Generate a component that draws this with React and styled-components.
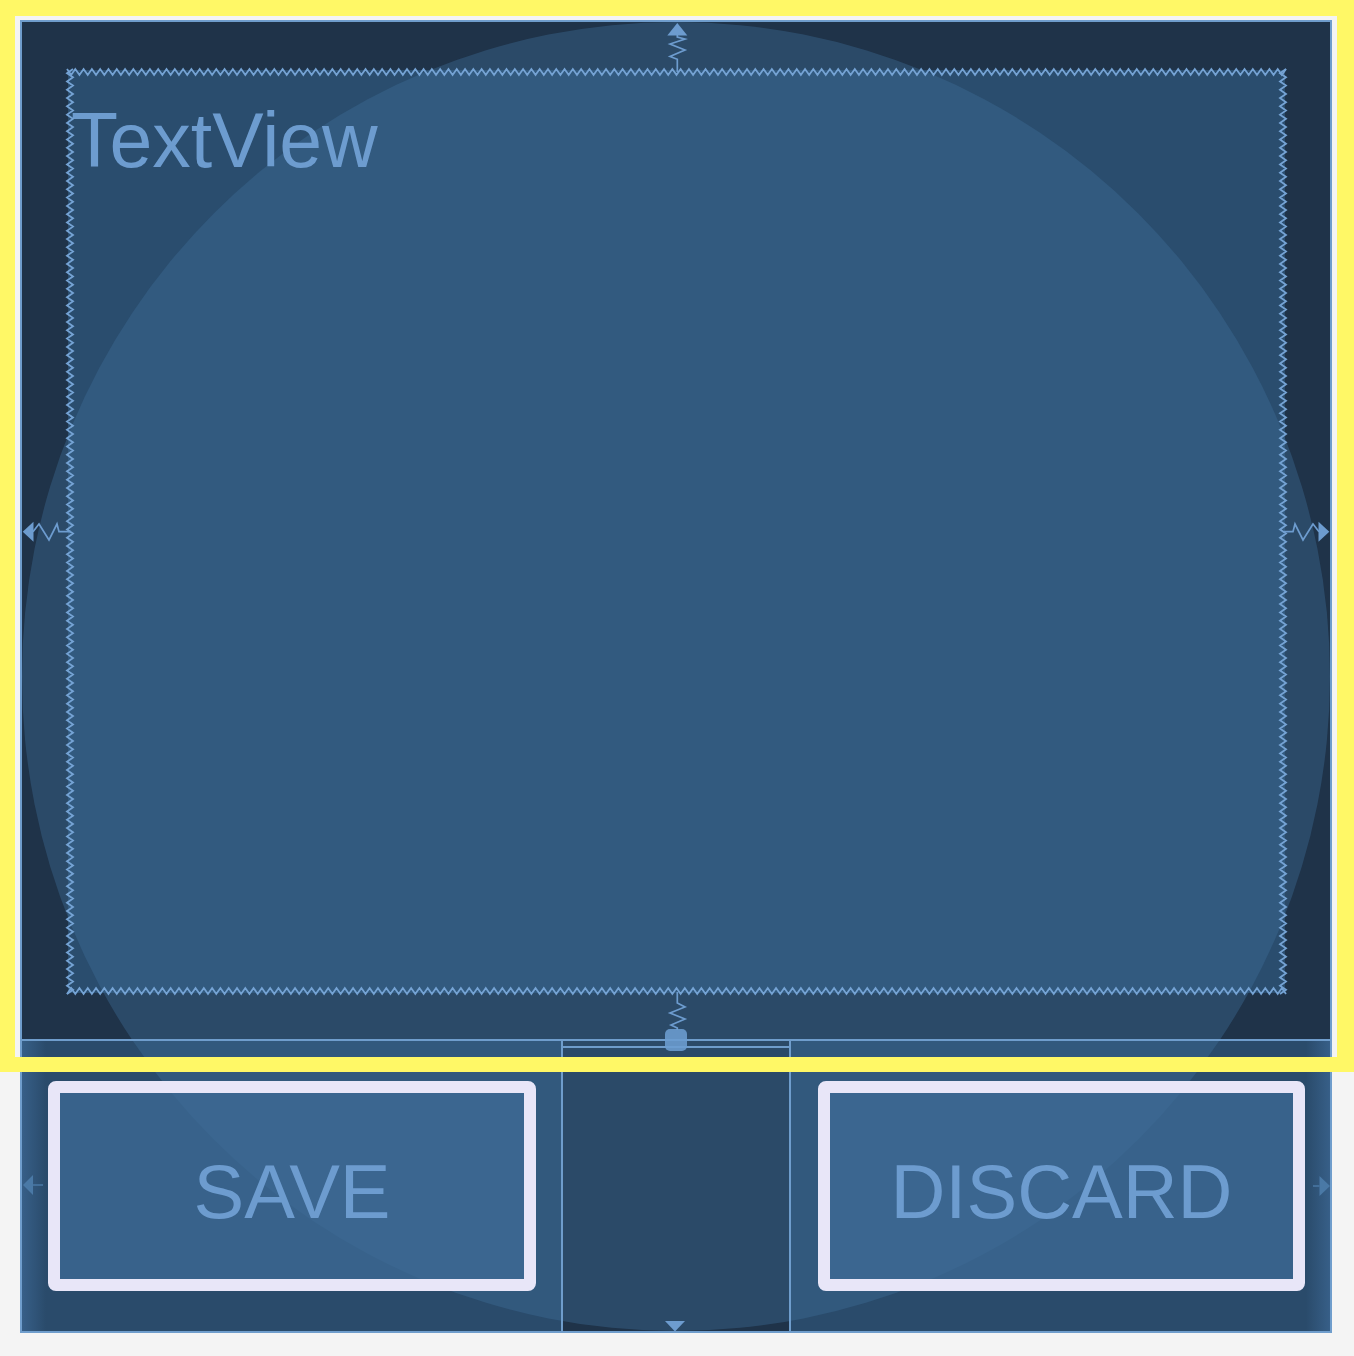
import React from 'react';
import styled, { createGlobalStyle } from 'styled-components';

const GlobalStyle = createGlobalStyle`
  html, body { margin: 0; padding: 0; background: #f4f4f4; }
  body { font-family: "Liberation Sans", Arial, sans-serif; }
`;

const LINE = '#6f9dcc';
const INK = '#6d9ccf';

const Page = styled.div`
  position: relative;
  width: 1354px;
  height: 1356px;
  box-sizing: border-box;
  padding: 20px 22px 23px 20px;
`;

const Selection = styled.div`
  position: absolute;
  left: 0;
  top: 0;
  width: 1354px;
  height: 1072px;
  box-sizing: border-box;
  border-style: solid;
  border-color: #fff866;
  border-width: 16px 17px 15px 15px;
  z-index: 5;
  pointer-events: none;
`;

const Canvas = styled.div`
  position: relative;
  width: 1312px;
  height: 1313px;
  box-sizing: border-box;
  border: 2px solid ${LINE};
  background: #1f3349;
  display: flex;
  flex-direction: column;
`;

const Circle = styled.div`
  position: absolute;
  inset: 0;
  border-radius: 50%;
  background: rgba(63, 110, 152, 0.4);
  z-index: 1;
  pointer-events: none;
`;

const TopArea = styled.div`
  flex: none;
  height: 1017px;
  box-sizing: border-box;
  padding: 48px 45px 46px 46px;
  display: flex;
`;

const TextViewBox = styled.div`
  flex: 1;
  position: relative;
  background: #2a4d6e;
  padding: 32px 0 0 3px;
`;

const Label = styled.div`
  position: relative;
  z-index: 2;
  font-size: 77px;
  line-height: 1;
  color: ${INK};
`;

const ZigBorder = styled.svg`
  position: absolute;
  left: 0;
  top: 0;
  overflow: visible;
  z-index: 2;
  pointer-events: none;
`;

const HLine = styled.div`
  flex: none;
  height: 2px;
  background: ${LINE};
  position: relative;
  z-index: 2;
`;

const BottomRow = styled.div`
  flex: none;
  height: 290px;
  display: grid;
  grid-template-columns: 539px 2px 226px 2px 539px;
`;

const Cell = styled.div`
  display: flex;
  box-sizing: border-box;
  padding: ${(p) => p.$pad};
  background: ${(p) =>
    `linear-gradient(${p.$edge === 'left' ? 'to right' : 'to left'}, #375f88 0px, #2a4b6b 24px)`};
`;

const VLine = styled.div`
  background: ${LINE};
  position: relative;
  z-index: 2;
`;

const Middle = styled.div`
  display: flex;
  flex-direction: column;
  padding-top: 5px;
`;

const MiddleLine = styled.div`
  height: 2px;
  background: ${LINE};
  position: relative;
  z-index: 2;
`;

const Button = styled.div`
  flex: 1;
  position: relative;
  z-index: 2;
  box-sizing: border-box;
  border: 12px solid #e8e6f8;
  border-radius: 8px;
  background: rgba(62, 108, 152, 0.7);
  display: flex;
  align-items: center;
  justify-content: center;
  padding-top: 12px;
  font-size: 76px;
  line-height: 1;
  color: ${INK};
`;

const Decor = styled.svg`
  position: absolute;
  left: 0;
  top: 0;
  z-index: 3;
  pointer-events: none;
  overflow: visible;
`;

function zigzag(x0, y0, x1, y1, amp, step) {
  const dx = x1 - x0;
  const dy = y1 - y0;
  const len = Math.hypot(dx, dy);
  const n = Math.round(len / step);
  const ux = dx / len;
  const uy = dy / len;
  const nx = -uy;
  const ny = ux;
  const pts = [];
  for (let i = 0; i <= n; i++) {
    const t = (i * len) / n;
    const o = i % 2 ? amp : 0;
    pts.push(`${(x0 + ux * t + nx * o).toFixed(2)},${(y0 + uy * t + ny * o).toFixed(2)}`);
  }
  return pts.join(' ');
}

const TV_W = 1217;
const TV_H = 923;

function TextViewBorder() {
  const a = 6;
  const s = 4.15;
  return (
    <ZigBorder width={TV_W} height={TV_H} viewBox={`0 0 ${TV_W} ${TV_H}`}>
      <g fill="none" stroke="#75a3d4" strokeWidth="1.8" strokeLinejoin="miter">
        <polyline points={zigzag(-1, -1, TV_W + 1, -1, a, s)} />
        <polyline points={zigzag(TV_W + 1, -1, TV_W + 1, TV_H + 1, a, s)} />
        <polyline points={zigzag(TV_W + 1, TV_H + 1, -1, TV_H + 1, a, s)} />
        <polyline points={zigzag(-1, TV_H + 1, -1, -1, a, s)} />
      </g>
    </ZigBorder>
  );
}

function Constraints() {
  return (
    <Decor width="1308" height="1309" viewBox="0 0 1308 1309">
      <g fill="none" stroke={INK} strokeWidth="1.7" strokeLinejoin="miter">
        <polyline points="655.3,13 655.3,15 663,17 648,22 663,28 648,34.5 655.3,37.3 655.3,50" />
        <polyline points="11,509.7 17,502 27,518 35,502 37,509.7 49,509.7" />
        <polyline points="1297,509.7 1291,502 1281,518 1273,502 1271,509.7 1262,509.7" />
        <polyline points="655.3,970 655.3,981 663,985 648,991 663,997 649,1003 655.3,1006 655.3,1008" />
      </g>
      <g fill={INK}>
        <polygon points="655.3,1 645.3,13.5 665.3,13.5" />
        <polygon points="0.7,509.7 11.5,499.7 11.5,519.7" />
        <polygon points="1307.3,509.7 1296.5,499.7 1296.5,519.7" />
        <polygon points="643,1299 663,1299 653,1309.5" />
        <rect x="643" y="1007" width="22" height="22" rx="5" fill="rgba(108,157,208,0.88)" />
      </g>
      <g fill="#4a79a6" stroke="#4a79a6" strokeWidth="1.5">
        <polygon points="1,1163 11,1153 11,1173" stroke="none" />
        <line x1="11" y1="1163" x2="21" y2="1163" />
        <polygon points="1308,1164 1297.5,1154 1297.5,1174" stroke="none" />
        <line x1="1291" y1="1164" x2="1297.5" y2="1164" />
      </g>
    </Decor>
  );
}

export default function App() {
  return (
    <>
      <GlobalStyle />
      <Page>
        <Canvas>
          <TopArea>
            <TextViewBox>
              <Label>TextView</Label>
              <TextViewBorder />
            </TextViewBox>
          </TopArea>
          <HLine />
          <BottomRow>
            <Cell $edge="left" $pad="40px 25px 40px 26px">
              <Button>SAVE</Button>
            </Cell>
            <VLine />
            <Middle>
              <MiddleLine />
            </Middle>
            <VLine />
            <Cell $edge="right" $pad="40px 25px 40px 27px">
              <Button>DISCARD</Button>
            </Cell>
          </BottomRow>
          <Circle />
          <Constraints />
        </Canvas>
        <Selection />
      </Page>
    </>
  );
}
